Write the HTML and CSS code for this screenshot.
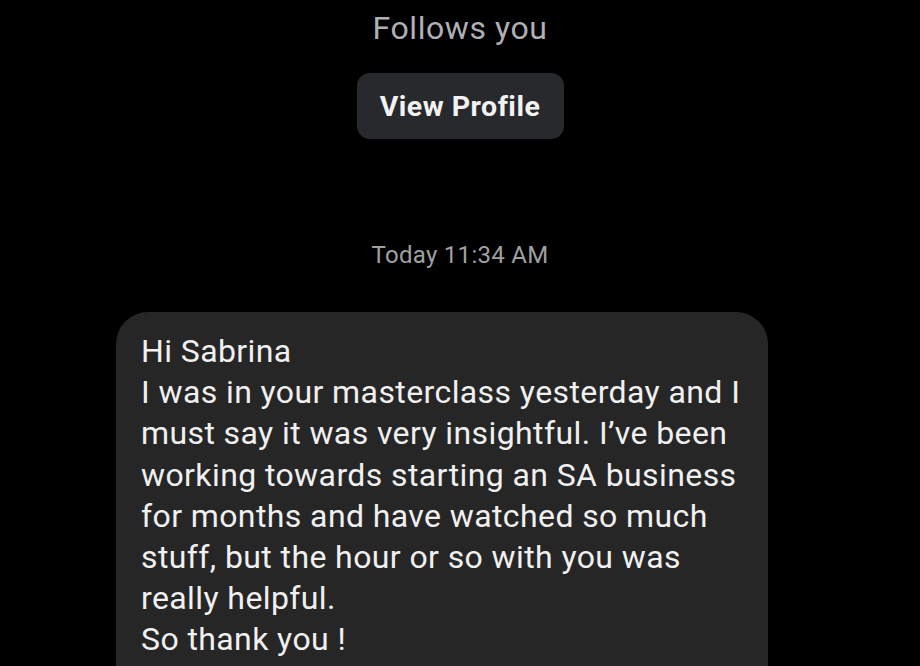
FILE: index.html
```html
<!DOCTYPE html>
<html>
<head>
<meta charset="utf-8">
<link rel="stylesheet" href="styles.css">
</head>
<body>
<main class="thread">
  <header class="profile">
    <p class="follows">Follows you</p>
    <button class="view-btn">View Profile</button>
  </header>
  <p class="stamp">Today 11:34 AM</p>
  <div class="bubble">
    <p class="msg">Hi Sabrina<br>I was in your masterclass yesterday and I<br>must say it was very insightful. I’ve been<br>working towards starting an SA business<br>for months and have watched so much<br>stuff, but the hour or so with you was<br>really helpful.<br>So thank you !<br>Wishing you a fantastic week ahead.</p>
  </div>
</main>
</body>
</html>
```
FILE: styles.css
```css
html, body {
  margin: 0;
  padding: 0;
  background: #000;
  height: 100%;
  overflow: hidden;
}
.thread {
  display: flex;
  flex-direction: column;
  align-items: center;
  font-family: Roboto, "Noto Sans", sans-serif;
}
.profile {
  display: flex;
  flex-direction: column;
  align-items: center;
}
.follows {
  margin: 10px 0 0;
  font-size: 32px;
  letter-spacing: 0.55px;
  line-height: 36px;
  color: #b0b0b3;
}
.view-btn {
  margin-top: 27px;
  width: 207px;
  height: 66px;
  border: none;
  border-radius: 13px;
  background: #27292d;
  color: #f2f2f2;
  font-family: Roboto, sans-serif;
  font-weight: 700;
  font-size: 28.5px;
  letter-spacing: 0.5px;
  padding: 0;
}
.stamp {
  margin: 101px 0 0;
  font-size: 24px;
  letter-spacing: 0.3px;
  line-height: 30px;
  color: #a0a0a0;
}
.bubble {
  margin-top: 42px;
  width: 652px;
  box-sizing: border-box;
  align-self: flex-start;
  margin-left: 116px;
  background: #262626;
  border-radius: 32px;
  padding: 19px 10px 30px 25px;
}
.msg {
  margin: 0;
  font-size: 32px;
  letter-spacing: 0.4px;
  line-height: 41.2px;
  color: #f0f0f0;
  white-space: nowrap;
}
```
